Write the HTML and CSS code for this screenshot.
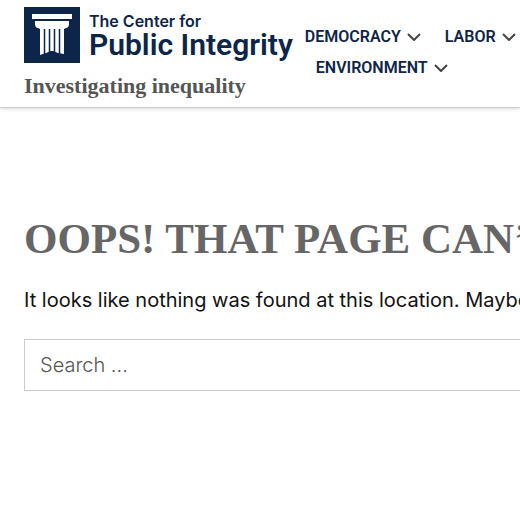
FILE: index.html
```
<!DOCTYPE html>
<html lang="en">
<head>
    <meta charset="UTF-8">
    <meta name="viewport" content="width=device-width, initial-scale=1.0">
    <title>Page not found - The Center for Public Integrity</title>
    <link rel="stylesheet" href="styles.css">
</head>
<body>
    <header class="site-header">
        <div class="branding">
            <a href="#" class="logo">
                <svg class="logo-mark" viewBox="0 0 56 56" aria-hidden="true">
                    <rect width="56" height="56" fill="#0d2548"/>
                    <path fill="#fff" d="M8 7h40v5H8zM11 14h34v3c0 2-1 4-3 4l-2 1v25l-6-1-5-2-2 0-5 2-6 2V22l-2-1c-2 0-3-2-3-4z"/>
                    <path fill="none" stroke="#0d2548" stroke-width="1.500" d="M20.500 22v26M25.500 22v23M30.500 22v23M35.500 22v26"/>
                </svg>
                <span class="logo-text">
                    <span class="logo-small">The Center for</span>
                    <span class="logo-big">Public Integrity</span>
                </span>
            </a>
            <p class="tagline">Investigating inequality</p>
        </div>
        <nav class="main-nav">
            <ul>
                <li><a href="#">DEMOCRACY <svg viewBox="0 0 14 8"><path d="M1 1l6 6 6-6"/></svg></a></li>
                <li><a href="#">LABOR <svg viewBox="0 0 14 8"><path d="M1 1l6 6 6-6"/></svg></a></li>
                <li><a href="#">ENVIRONMENT <svg viewBox="0 0 14 8"><path d="M1 1l6 6 6-6"/></svg></a></li>
            </ul>
        </nav>
    </header>

    <main class="content">
        <h1>OOPS! THAT PAGE CAN’T BE FOUND.</h1>
        <p>It looks like nothing was found at this location. Maybe try a search?</p>
        <form class="search-form">
            <input type="search" name="s" placeholder="Search ..." aria-label="Search for">
        </form>
    </main>
</body>
</html>
```

FILE: styles.css
```
body {
    margin: 0;
    background-color: #fff;
    color: #111;
    font-family: Inter, sans-serif;
}
a {
    color: #0d2548;
    text-decoration: none;
}
.site-header {
    display: flex;
    gap: 12px;
    padding: 7px 0 8px 24px;
    border-bottom: 1px solid #ccc;
    box-shadow: 0 1px 4px rgba(0, 0, 0, 0.15);
}
.branding {
    flex: none;
}
.logo {
    display: flex;
    gap: 9px;
}
.logo-mark {
    width: 56px;
    height: 56px;
}
.logo-text {
    display: flex;
    flex-direction: column;
    padding-top: 4px;
    white-space: nowrap;
}
.logo-small {
    font-size: 16px;
    line-height: 20px;
    font-weight: 600;
}
.logo-big {
    font-family: Roboto, sans-serif;
    font-size: 30px;
    line-height: 28px;
    font-weight: 600;
}
.tagline {
    margin: 10px 0 0;
    color: #555;
    font: bold 22px/26px "Liberation Serif", serif;
}
.main-nav {
    flex: 1;
    min-width: 0;
    padding-top: 14px;
}
.main-nav ul {
    display: flex;
    flex-wrap: wrap;
    column-gap: 13px;
    margin: 0;
    padding: 0;
    list-style: none;
}
.main-nav li {
    margin-left: 11px;
}
.main-nav li:first-child {
    margin-left: 0;
}
.main-nav a {
    display: flex;
    align-items: center;
    gap: 6px;
    font-family: Roboto, sans-serif;
    font-size: 16px;
    line-height: 31px;
    font-weight: 600;
}
.main-nav svg {
    width: 14px;
    height: 8px;
    fill: none;
    stroke: #444;
    stroke-width: 2;
}
.content {
    padding: 106px 0 0 24px;
    overflow: hidden;
}
h1 {
    margin: 0 0 21px;
    color: #666;
    font: bold 43px/50px "Liberation Serif", serif;
    white-space: nowrap;
}
.content p {
    margin: 0 0 24px;
    font-size: 20px;
    line-height: 30px;
    white-space: nowrap;
}
.search-form input {
    box-sizing: border-box;
    width: 100%;
    height: 52px;
    margin: 0;
    padding: 0 15px;
    border: 1px solid #ccc;
    border-right: 0;
    border-radius: 0;
    font: 300 20px Inter, sans-serif;
    outline: none;
    appearance: none;
}
.search-form input::placeholder {
    color: #555;
}
```
